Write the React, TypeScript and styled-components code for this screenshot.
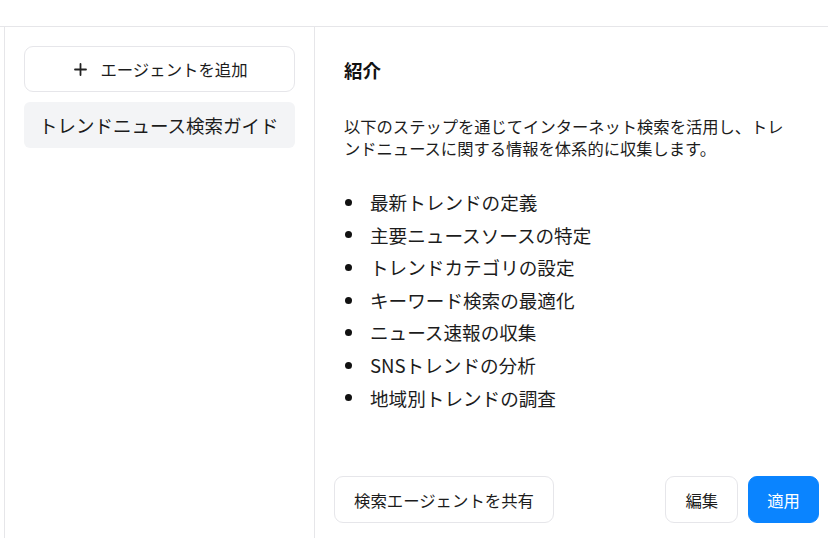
import React from "react";
import styled, { createGlobalStyle } from "styled-components";

const Global = createGlobalStyle`
  html, body { margin: 0; padding: 0; background: #fff; overflow: hidden; }
  body { font-family: "Noto Sans CJK JP", "Noto Sans", sans-serif; color: #1c1c1c; }
  * { box-sizing: border-box; }
`;

const Page = styled.div`
  display: flex;
  flex-direction: column;
  width: 828px;
  height: 538px;
`;

const TopBar = styled.div`
  height: 27px;
  flex: none;
  border-bottom: 1px solid #e6e6e9;
`;

const Main = styled.div`
  flex: 1;
  display: flex;
  margin-left: 4px;
  border-left: 1px solid #e6e6e9;
  min-height: 0;
`;

const Sidebar = styled.aside`
  width: 310px;
  flex: none;
  border-right: 1px solid #e6e6e9;
  padding: 19px 19px 0 19px;
  display: flex;
  flex-direction: column;
  gap: 10px;
`;

const AddButton = styled.button`
  height: 46px;
  display: flex;
  align-items: center;
  justify-content: center;
  gap: 13px;
  border: 1px solid #e6e6ea;
  border-radius: 9px;
  background: #fff;
  font-family: inherit;
  font-size: 16.4px;
  color: #1c1c1c;
  padding: 0 0 0 3px;
`;

const AgentItem = styled.div`
  height: 46px;
  display: flex;
  align-items: center;
  padding-left: 15px;
  border-radius: 6px;
  background: #f3f4f6;
  font-size: 18.5px;
  color: #1c1c1c;
`;

const Detail = styled.section`
  flex: 1;
  display: flex;
  flex-direction: column;
  padding: 0 9px 15px 19px;
  min-width: 0;
`;

const Content = styled.div`
  padding: 30px 0 0 10px;
  width: 460px;
`;

const Heading = styled.h2`
  margin: 0;
  font-size: 18.5px;
  line-height: 26px;
  font-weight: 700;
  color: #111;
`;

const Paragraph = styled.p`
  margin: 32px 0 0;
  font-size: 16.3px;
  line-height: 22px;
  color: #1c1c1c;
`;

const List = styled.ul`
  margin: 27px 0 0;
  padding: 0;
  list-style: none;
`;

const Item = styled.li`
  display: flex;
  align-items: center;
  gap: 18px;
  font-size: 18.6px;
  line-height: 32.6px;
  color: #1c1c1c;
`;

const Bullet = styled.span`
  width: 7px;
  height: 7px;
  margin-left: 1px;
  border-radius: 50%;
  background: #111;
  flex: none;
`;

const Footer = styled.div`
  margin-top: auto;
  display: flex;
  align-items: center;
  gap: 10px;
`;

const Spacer = styled.div`
  flex: 1;
`;

const Button = styled.button<{ $primary?: boolean }>`
  height: 47px;
  padding: 0 ${(p) => (p.$primary ? "18px" : "19px")};
  border-radius: 9px;
  border: 1px solid ${(p) => (p.$primary ? "#0a84ff" : "#e6e6ea")};
  background: ${(p) => (p.$primary ? "#0a84ff" : "#fff")};
  color: ${(p) => (p.$primary ? "#fff" : "#1c1c1c")};
  font-family: inherit;
  font-size: 16.4px;
  white-space: nowrap;
`;

const PlusIcon = () => (
  <svg width="13" height="13" viewBox="0 0 13 13" fill="none" stroke="#222" strokeWidth="1.8" strokeLinecap="round">
    <path d="M6.5 1v11M1 6.5h11" />
  </svg>
);

const steps = [
  "最新トレンドの定義",
  "主要ニュースソースの特定",
  "トレンドカテゴリの設定",
  "キーワード検索の最適化",
  "ニュース速報の収集",
  "SNSトレンドの分析",
  "地域別トレンドの調査",
];

export default function App() {
  return (
    <>
      <Global />
      <Page>
        <TopBar />
        <Main>
          <Sidebar>
            <AddButton>
              <PlusIcon />
              <span>エージェントを追加</span>
            </AddButton>
            <AgentItem>トレンドニュース検索ガイド</AgentItem>
          </Sidebar>
          <Detail>
            <Content>
              <Heading>紹介</Heading>
              <Paragraph>
                以下のステップを通じてインターネット検索を活用し、トレンドニュースに関する情報を体系的に収集します。
              </Paragraph>
              <List>
                {steps.map((s) => (
                  <Item key={s}>
                    <Bullet />
                    <span>{s}</span>
                  </Item>
                ))}
              </List>
            </Content>
            <Footer>
              <Button>検索エージェントを共有</Button>
              <Spacer />
              <Button>編集</Button>
              <Button $primary>適用</Button>
            </Footer>
          </Detail>
        </Main>
      </Page>
    </>
  );
}
